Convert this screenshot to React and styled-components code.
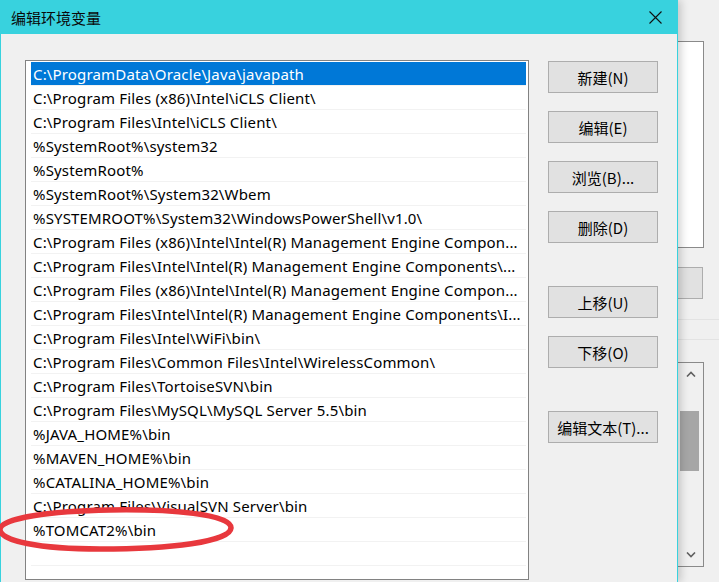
import React from 'react';
import styled, { createGlobalStyle } from 'styled-components';

const GlobalStyle = createGlobalStyle`
  html, body {
    margin: 0;
    padding: 0;
    background: #f0f0f0;
    overflow: hidden;
  }
`;

const Screen = styled.div`
  position: relative;
  display: flex;
  width: 719px;
  height: 582px;
  overflow: hidden;
  background: #f0f0f0;
  font-family: "Noto Sans", "Noto Sans CJK SC", sans-serif;
`;

const Dialog = styled.div`
  position: relative;
  z-index: 2;
  flex: 0 0 678px;
  display: flex;
  flex-direction: column;
  border-left: 1px solid #38d2de;
  border-right: 1px solid #38d2de;
  box-sizing: border-box;
  background: #f0f0f0;
  box-shadow: 3px 0 8px rgba(0, 0, 0, 0.18);
`;

const TitleBar = styled.div`
  height: 34px;
  flex: 0 0 34px;
  display: flex;
  align-items: center;
  justify-content: space-between;
  padding: 0 0 0 10px;
  background: #38d2de;
  font-family: "Noto Sans CJK SC", sans-serif;
  font-size: 15px;
  color: #0a0a0a;
`;

const CloseButton = styled.div`
  width: 44px;
  height: 34px;
  display: flex;
  align-items: center;
  justify-content: center;
`;

const Body = styled.div`
  flex: 1;
  display: flex;
  gap: 19px;
  padding: 26px 0 0 24px;
`;

const ListBox = styled.div`
  width: 504px;
  height: 520px;
  flex: 0 0 504px;
  box-sizing: border-box;
  border: 1px solid #828282;
  background: #fff;
  padding: 1px 2px 0 5px;
  overflow: hidden;
`;

const Row = styled.div`
  height: 24px;
  box-sizing: border-box;
  border-bottom: 1px solid #f2f2f2;
  padding-left: 2px;
  display: flex;
  align-items: center;
  white-space: nowrap;
  overflow: hidden;
  font-size: 15px;
  letter-spacing: 0.16px;
  color: ${({ $selected }) => ($selected ? '#fff' : '#000')};
  background: ${({ $selected }) => ($selected ? '#0078d7' : 'transparent')};
`;

const ButtonColumn = styled.div`
  display: flex;
  flex-direction: column;
  padding-top: 1px;
`;

const Button = styled.div`
  width: 110px;
  height: 32px;
  box-sizing: border-box;
  margin-top: ${({ $gap }) => $gap}px;
  border: 1px solid #adadad;
  background: #e1e1e1;
  display: flex;
  align-items: center;
  justify-content: center;
  font-family: "Noto Sans CJK SC", sans-serif;
  font-size: 15px;
  color: #000;
`;

const BackWindow = styled.div`
  flex: 1;
  display: flex;
  flex-direction: column;
  padding-top: 41px;
  background: #f0f0f0;
`;

const BackField = styled.div`
  width: 26px;
  height: 207px;
  box-sizing: border-box;
  border: 1px solid #8a8a8a;
  border-left: none;
  background: #fff;
`;

const BackButton = styled.div`
  margin-top: 19px;
  width: 25px;
  height: 32px;
  box-sizing: border-box;
  border: 1px solid #adadad;
  border-left: none;
  background: #e1e1e1;
`;

const BackRule = styled.div`
  margin-top: ${({ $gap }) => $gap}px;
  height: 1px;
  background: #e3e3e3;
`;

const BackScroll = styled.div`
  margin-top: 22px;
  width: 26px;
  height: 205px;
  box-sizing: border-box;
  border: 1px solid #8a8a8a;
  border-left: none;
  background: #f0f0f0;
  display: flex;
  flex-direction: column;
  align-items: center;
`;

const Arrow = styled.div`
  height: 22px;
  width: 100%;
  display: flex;
  align-items: center;
  justify-content: center;
`;

const Thumb = styled.div`
  margin-top: 26px;
  width: 19px;
  height: 60px;
  background: #a6a6a6;
  margin-left: -2px;
`;

const Spacer = styled.div`
  flex: 1;
`;

const Annotation = styled.svg`
  position: absolute;
  left: 0;
  top: 0;
  z-index: 5;
  pointer-events: none;
`;

const entries = [
  'C:\\ProgramData\\Oracle\\Java\\javapath',
  'C:\\Program Files (x86)\\Intel\\iCLS Client\\',
  'C:\\Program Files\\Intel\\iCLS Client\\',
  '%SystemRoot%\\system32',
  '%SystemRoot%',
  '%SystemRoot%\\System32\\Wbem',
  '%SYSTEMROOT%\\System32\\WindowsPowerShell\\v1.0\\',
  'C:\\Program Files (x86)\\Intel\\Intel(R) Management Engine Compon...',
  'C:\\Program Files\\Intel\\Intel(R) Management Engine Components\\...',
  'C:\\Program Files (x86)\\Intel\\Intel(R) Management Engine Compon...',
  'C:\\Program Files\\Intel\\Intel(R) Management Engine Components\\I...',
  'C:\\Program Files\\Intel\\WiFi\\bin\\',
  'C:\\Program Files\\Common Files\\Intel\\WirelessCommon\\',
  'C:\\Program Files\\TortoiseSVN\\bin',
  'C:\\Program Files\\MySQL\\MySQL Server 5.5\\bin',
  '%JAVA_HOME%\\bin',
  '%MAVEN_HOME%\\bin',
  '%CATALINA_HOME%\\bin',
  'C:\\Program Files\\VisualSVN Server\\bin',
  '%TOMCAT2%\\bin',
  '',
  '',
];

const buttons = [
  { label: '新建(N)', gap: 0 },
  { label: '编辑(E)', gap: 18 },
  { label: '浏览(B)...', gap: 18 },
  { label: '删除(D)', gap: 18 },
  { label: '上移(U)', gap: 43 },
  { label: '下移(O)', gap: 18 },
  { label: '编辑文本(T)...', gap: 43 },
];

const Chevron = ({ up }) => (
  <svg width="10" height="6" viewBox="0 0 10 6">
    <path
      d={up ? 'M1 5.5 L5 1.5 L9 5.5' : 'M1 0.5 L5 4.5 L9 0.5'}
      fill="none"
      stroke="#606060"
      strokeWidth="1.6"
    />
  </svg>
);

export default function App() {
  return (
    <>
      <GlobalStyle />
      <Screen>
        <Dialog>
          <TitleBar>
            编辑环境变量
            <CloseButton>
              <svg width="13" height="13" viewBox="0 0 13 13">
                <path d="M0.5 0.5 L12.5 12.5 M12.5 0.5 L0.5 12.5" stroke="#111" strokeWidth="1.1" />
              </svg>
            </CloseButton>
          </TitleBar>
          <Body>
            <ListBox>
              {entries.map((text, i) => (
                <Row key={i} $selected={i === 0}>
                  {text}
                </Row>
              ))}
            </ListBox>
            <ButtonColumn>
              {buttons.map((b) => (
                <Button key={b.label} $gap={b.gap}>
                  {b.label}
                </Button>
              ))}
            </ButtonColumn>
          </Body>
        </Dialog>
        <BackWindow>
          <BackField />
          <BackButton />
          <BackRule $gap={20} />
          <BackRule $gap={19} />
          <BackScroll>
            <Arrow>
              <Chevron up />
            </Arrow>
            <Thumb />
            <Spacer />
            <Arrow>
              <Chevron />
            </Arrow>
          </BackScroll>
        </BackWindow>
        <Annotation width="719" height="582" viewBox="0 0 719 582">
          <path
            d="M231 528 C232 514 170 509 110 510 C50 511 2 518 0 529 C-1 541 40 549 100 549 C170 549 230 542 231 528 Z"
            fill="none"
            stroke="#e8383d"
            strokeWidth="5.5"
          />
        </Annotation>
      </Screen>
    </>
  );
}
